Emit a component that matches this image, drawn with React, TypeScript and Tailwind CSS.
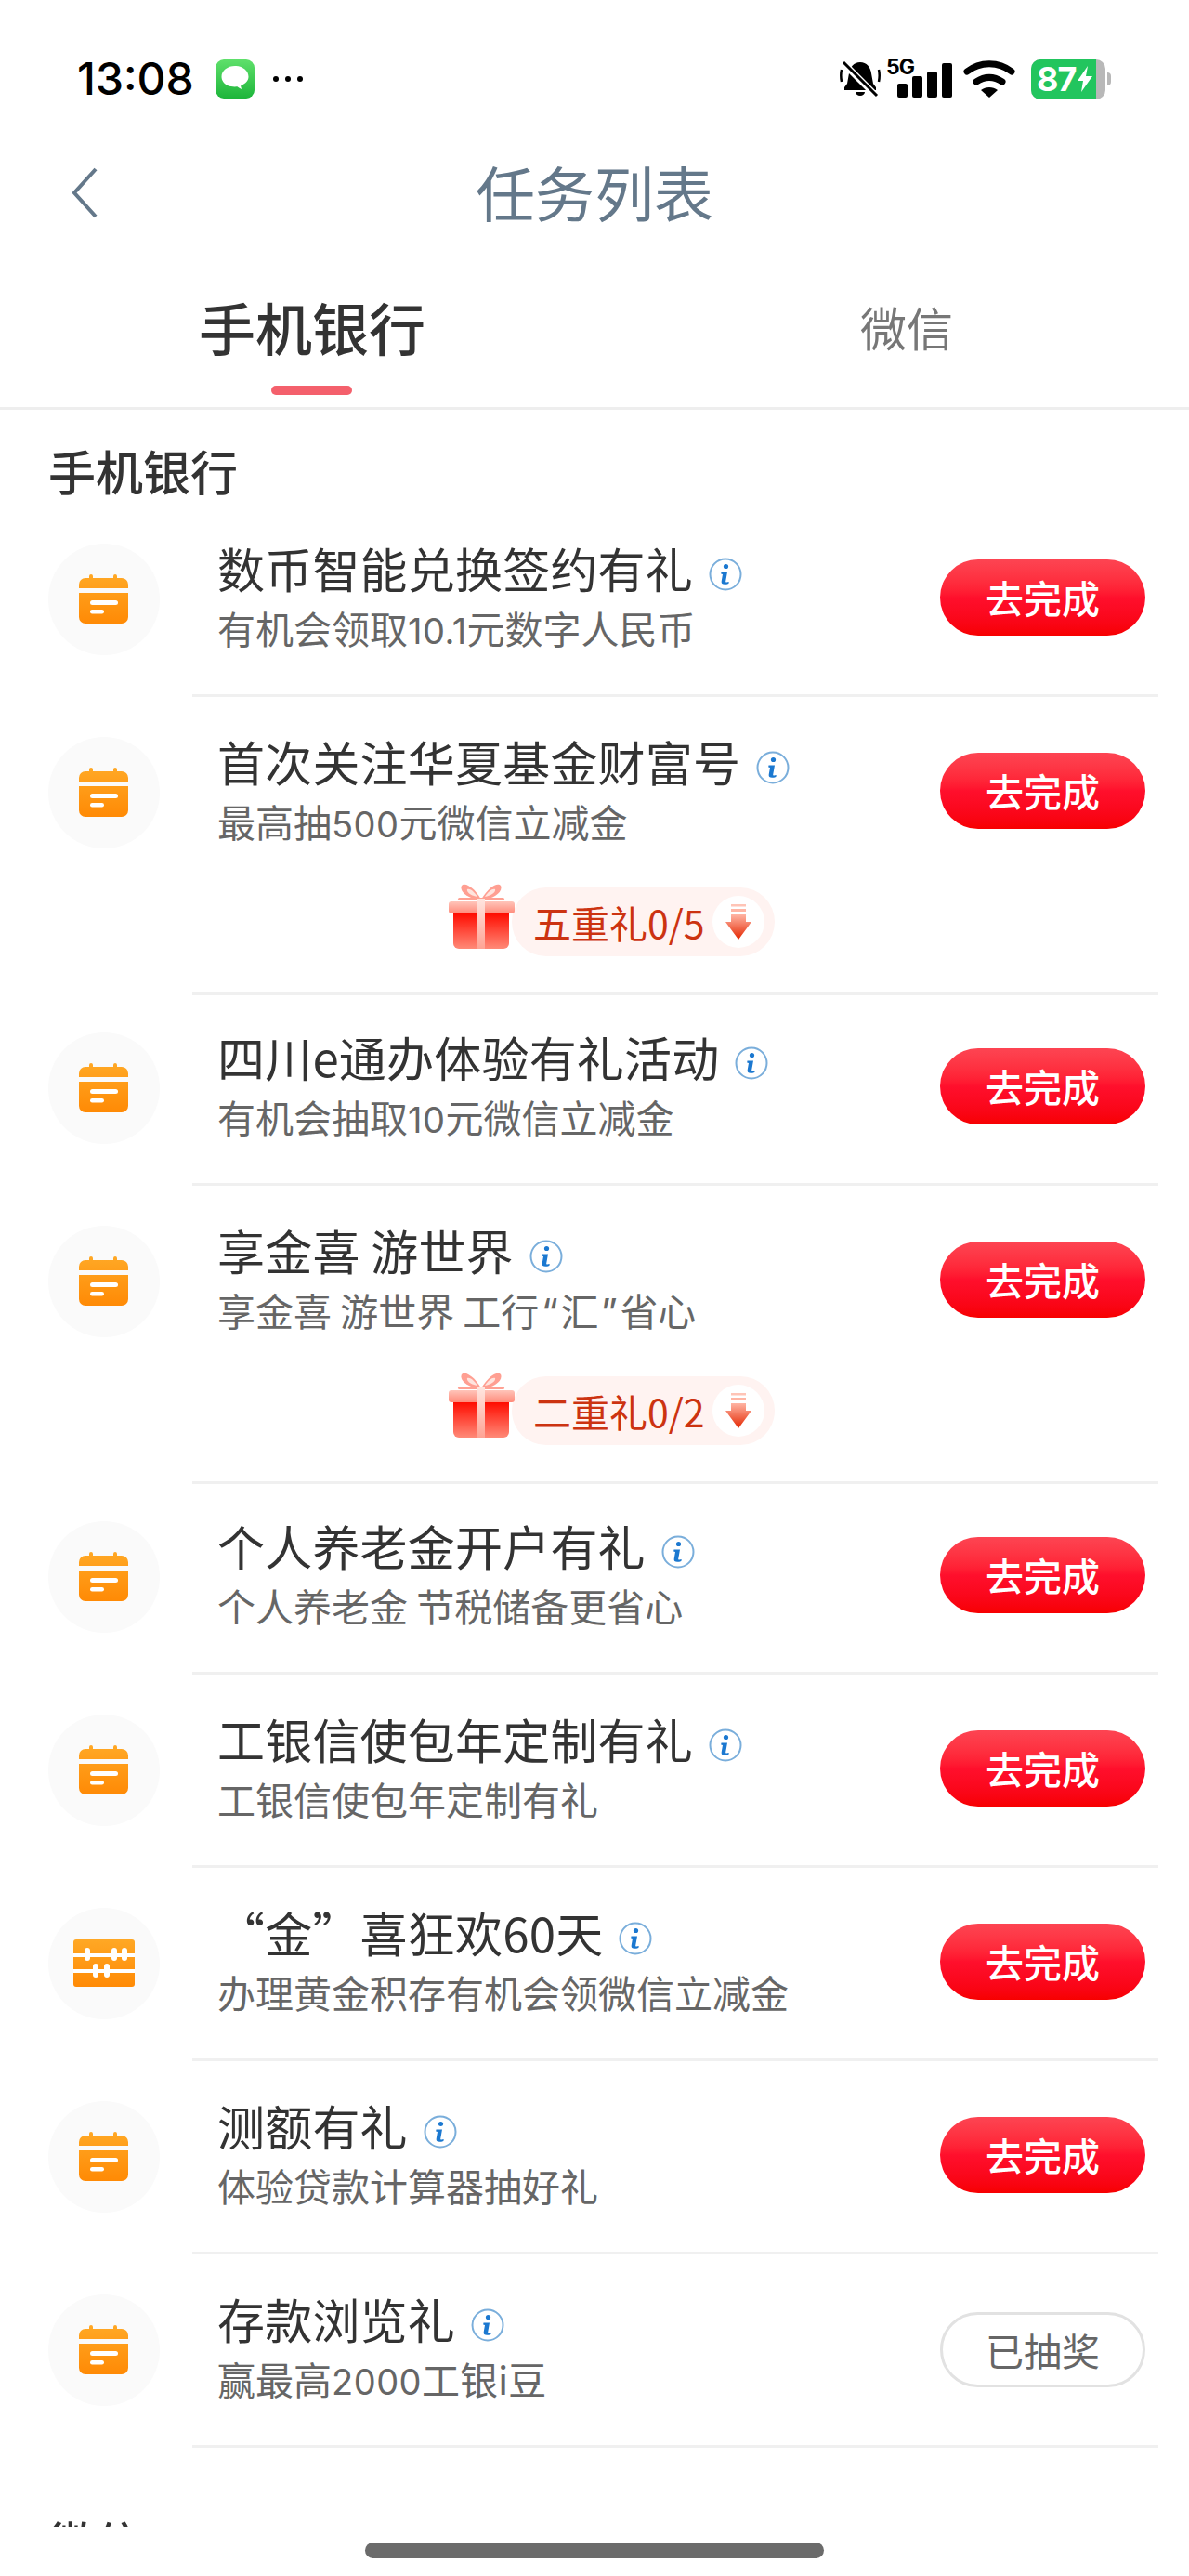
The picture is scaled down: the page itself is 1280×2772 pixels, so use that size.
import React from "react";

type Task = {
  title: string;
  sub: string;
  icon?: "calendar" | "abacus";
  gift?: string;
  done?: boolean;
};

const tasks: Task[] = [
  { title: "数币智能兑换签约有礼", sub: "有机会领取10.1元数字人民币" },
  { title: "首次关注华夏基金财富号", sub: "最高抽500元微信立减金", gift: "五重礼0/5" },
  { title: "四川e通办体验有礼活动", sub: "有机会抽取10元微信立减金" },
  { title: "享金喜 游世界", sub: "享金喜 游世界 工行“汇”省心", gift: "二重礼0/2" },
  { title: "个人养老金开户有礼", sub: "个人养老金 节税储备更省心" },
  { title: "工银信使包年定制有礼", sub: "工银信使包年定制有礼" },
  { title: "“金”喜狂欢60天", sub: "办理黄金积存有机会领微信立减金", icon: "abacus" },
  { title: "测额有礼", sub: "体验贷款计算器抽好礼" },
  { title: "存款浏览礼", sub: "赢最高2000工银i豆", done: true },
];

// digits and quotes are narrower in the app's font than in Noto CJK
const SubText = ({ text }: { text: string }) => (
  <>
    {text.split(/([0-9.]+|[“”])/).map((part, i) => {
      if (i % 2 === 0) return part;
      if (part === "“" || part === "”") {
        return (
          <span key={i} className="inline-block w-[23px] text-center font-['Inter',sans-serif] leading-none">
            {part}
          </span>
        );
      }
      return (
        <span key={i} className="font-['Inter',sans-serif] text-[38px] leading-none tracking-[0.5px]">
          {part}
        </span>
      );
    })}
  </>
);

const CalendarIcon = () => (
  <svg width="54" height="55" viewBox="0 0 54 55">
    <defs>
      <linearGradient id="cal" x1="0" y1="0" x2="0" y2="1">
        <stop offset="0" stopColor="#ffa825" />
        <stop offset="1" stopColor="#ff8a05" />
      </linearGradient>
    </defs>
    <path
      d="M11 5V3a2 2 0 0 1 4 0v2h22V3a2 2 0 0 1 4 0v2h5a7 7 0 0 1 7 7v4H0v-4a7 7 0 0 1 7-7zM0 21h53v26a7 7 0 0 1-7 7H7a7 7 0 0 1-7-7z"
      fill="url(#cal)"
    />
    <rect x="12" y="29" width="30" height="5" rx="2.5" fill="#fff" />
    <rect x="12" y="39" width="15" height="4.5" rx="2.2" fill="#fff" />
  </svg>
);

const AbacusIcon = () => (
  <svg width="66" height="51" viewBox="0 0 66 51">
    <defs>
      <linearGradient id="aba" x1="0" y1="0" x2="0" y2="1">
        <stop offset="0" stopColor="#ffa825" />
        <stop offset="1" stopColor="#ff8a05" />
      </linearGradient>
    </defs>
    <rect width="66" height="51" rx="3" fill="url(#aba)" />
    <rect y="15" width="66" height="4" fill="#fff" />
    <rect y="32" width="66" height="4" fill="#fff" />
    {[15, 44, 55].map((x) => (
      <rect key={x} x={x - 3} y="9" width="6" height="14" rx="3" fill="#fff" />
    ))}
    {[24, 36].map((x) => (
      <rect key={x} x={x - 3} y="26" width="6" height="15" rx="3" fill="#fff" />
    ))}
  </svg>
);

const InfoIcon = () => (
  <svg width="36" height="36" viewBox="0 0 36 36" className="mt-[14px] shrink-0">
    <circle cx="18" cy="18" r="16.5" fill="none" stroke="#7aaedb" strokeWidth="2" />
    <circle cx="18.5" cy="9.5" r="2.6" fill="#1b78d0" />
    <path
      d="M13.5 15.5h6.5l-1.8 10c-.2 1 .8 1.3 3.5.6l-.3 1.8c-1.5.7-3 .9-4.3.9-2.500-.1-3.800-1.200-3.400-3.300l1.300-7.500-1.800-.4z"
      fill="#1b78d0"
    />
  </svg>
);

const GiftIcon = () => (
  <svg width="71" height="71" viewBox="0 0 71 71" className="relative mt-[-4px] shrink-0 self-start">
    <defs>
      <linearGradient id="giftBody" x1="0" y1="0" x2="0" y2="1">
        <stop offset="0" stopColor="#ff0c00" />
        <stop offset="1" stopColor="#ff8a78" />
      </linearGradient>
      <linearGradient id="giftLid" x1="0" y1="0" x2="0" y2="1">
        <stop offset="0" stopColor="#ffc5ba" />
        <stop offset="1" stopColor="#ff8a7a" />
      </linearGradient>
      <linearGradient id="giftBand" x1="0" y1="0" x2="0" y2="1">
        <stop offset="0" stopColor="#ffe6e0" />
        <stop offset="1" stopColor="#ffa394" />
      </linearGradient>
    </defs>
    <path d="M35 17C27 3 17-2 14 2c-3 6 7 15 21 15z" fill="#ff9f92" />
    <path d="M35 17C43 3 53-2 56 2c3 6-7 15-21 15z" fill="#ff9f92" />
    <path d="M31 14C27 8 23 5 20 6c-1 3 4 7 11 8zM39 14c4-6 8-9 11-8 1 3-4 7-11 8z" fill="#ffe4de" />
    <rect x="10" y="15" width="50" height="3" rx="1.500" fill="#ffa193" />
    <rect x="0" y="19" width="71" height="13" rx="3" fill="url(#giftLid)" />
    <path d="M5 32h60v32a6 6 0 0 1-6 6H11a6 6 0 0 1-6-6z" fill="url(#giftBody)" />
    <rect x="30" y="16" width="9" height="54" fill="url(#giftBand)" />
  </svg>
);

const DownArrow = () => (
  <svg width="28" height="38" viewBox="0 0 28 38">
    <defs>
      <linearGradient id="arr" x1="0" y1="0" x2="0" y2="1">
        <stop offset="0" stopColor="#ffb5a4" />
        <stop offset="1" stopColor="#e42600" />
      </linearGradient>
    </defs>
    <rect x="6" y="0" width="16" height="2.500" fill="#ffc4b6" />
    <rect x="6" y="5" width="16" height="3" fill="#ffb5a4" />
    <path d="M6 11h16v8h6L14 38 0 19h6z" fill="url(#arr)" />
  </svg>
);

const TaskRow = ({ task }: { task: Task }) => (
  <>
    <div className="flex h-[205px] items-center pl-[52px] pr-[47px]">
      <div className="flex h-[120px] w-[120px] shrink-0 items-center justify-center rounded-full bg-[#fafafa]">
        {task.icon === "abacus" ? <AbacusIcon /> : <CalendarIcon />}
      </div>
      <div className="mb-[4px] ml-[62px] min-w-0 flex-1">
        <div className="flex items-center gap-[17px] text-[51px] leading-[66px] tracking-[0.2px] text-[#333333]">
          <span>{task.title}</span>
          <InfoIcon />
        </div>
        <div className="mt-[-2px] text-[41px] leading-[66px] text-[#666666]">
          <SubText text={task.sub} />
        </div>
      </div>
      {task.done ? (
        <div className="flex h-[81px] w-[221px] shrink-0 items-center justify-center rounded-full border-[3px] border-[#e2e2e2] text-[41px] text-[#666666]">
          已抽奖
        </div>
      ) : (
        <div className="mb-[3px] flex h-[82px] w-[221px] shrink-0 items-center justify-center rounded-full bg-gradient-to-b from-[#fd4452] via-[#ff0f2c] to-[#f70000] text-[41px] font-medium text-white">
          去完成
        </div>
      )}
    </div>
    {task.gift && (
      <div className="flex h-[113px] pl-[483px]">
        <div className="flex h-[74px] items-center">
          <GiftIcon />
          <div className="ml-[-3px] flex h-[74px] w-[283px] items-center rounded-full bg-[#fff3f1] pl-[23px]">
            <span className="w-[193px] text-[41px] leading-none text-[#cc3311]">{task.gift}</span>
            <span className="flex h-[56px] w-[56px] items-center justify-center rounded-full bg-white">
              <DownArrow />
            </span>
          </div>
        </div>
      </div>
    )}
    {/* the divider under a gift row sits a little lower than the row rhythm */}
    <div className={task.gift ? "mb-[-3px] ml-[207px] mr-[33px] h-[3px] bg-[#f0f0f0]" : "ml-[207px] mr-[33px] h-[3px] bg-[#f0f0f0]"} />
  </>
);

export default function App() {
  return (
    <div
      lang="zh-CN"
      className="flex h-[2772px] w-[1280px] flex-col overflow-hidden bg-white font-['Noto_Sans_CJK_SC',sans-serif]"
    >
      {/* status bar */}
      <div className="relative flex h-[140px] shrink-0 items-start justify-between pl-[83px] pr-[84px] pt-[56px]">
        <div className="flex h-[58px] items-center">
          <span className="font-['Inter',sans-serif] text-[48px] font-medium leading-none text-black">13:08</span>
          <svg width="42" height="42" viewBox="0 0 42 42" className="ml-[23px]">
            <defs>
              <linearGradient id="msg" x1="0" y1="0" x2="0" y2="1">
                <stop offset="0" stopColor="#5fe06b" />
                <stop offset="1" stopColor="#1db53a" />
              </linearGradient>
            </defs>
            <rect width="42" height="42" rx="9" fill="url(#msg)" />
            <path
              d="M21 7c-8 0-14.500 4.900-14.500 11.500 0 4 2.500 7.500 6.500 9.500 3 1.300 7 1.700 10.500 1.300 1.200 1.200 3 2.200 5 2.700-.8-1-1.300-2.200-1.300-3.800C32.700 26 35.500 22.500 35.500 18.500 35.500 11.900 29 7 21 7z"
              fill="#fff"
            />
          </svg>
          <div className="ml-[20px] flex gap-[7px]">
            <span className="h-[6px] w-[6px] rounded-full bg-black" />
            <span className="h-[6px] w-[6px] rounded-full bg-black" />
            <span className="h-[6px] w-[6px] rounded-full bg-black" />
          </div>
        </div>
        <div className="flex h-[58px] items-center">
          {/* muted bell */}
          <svg width="44" height="40" viewBox="0 0 44 40">
            <path d="M22 2c-7 0-11 5-12 12l-2 11-3 4v3h34v-3l-3-4-2-11C33 7 29 2 22 2z" fill="#000" />
            <path d="M17 34h10a5 4 0 0 1-10 0z" fill="#000" />
            <path d="M2 10c-1 4-1 8 0 13M42 10c1 4 1 8 0 13" fill="none" stroke="#000" strokeWidth="2.500" />
            <path d="M4 3l36 36" stroke="#fff" strokeWidth="7" />
            <path d="M4 2l36 36" stroke="#000" strokeWidth="3" />
          </svg>
          <div className="relative ml-[6px] h-[42px] w-[71px]">
            <span className="absolute left-0 top-[-4px] font-['Inter',sans-serif] text-[23px] font-bold leading-[24px] tracking-[-1px] text-black">
              5G
            </span>
            <div className="absolute bottom-[1px] right-0 flex items-end gap-[5px]">
              <span className="h-[15px] w-[11px] rounded-[2px] bg-black" />
              <span className="h-[23px] w-[11px] rounded-[2px] bg-black" />
              <span className="h-[28px] w-[11px] rounded-[2px] bg-black" />
              <span className="h-[37px] w-[11px] rounded-[2px] bg-black" />
            </div>
          </div>
          <svg width="56" height="40" viewBox="0 0 56 40" className="ml-[12px]">
            <path d="M4 12c14-11 34-11 48 0" fill="none" stroke="#000" strokeWidth="7" strokeLinecap="round" />
            <path d="M14 23c9-6 19-6 28 0" fill="none" stroke="#000" strokeWidth="7" strokeLinecap="round" />
            <path d="M19 32c5-4 13-4 18 0l-9 8z" fill="#000" />
          </svg>
          <div className="relative ml-[17px] flex h-[43px] w-[80px] items-center overflow-hidden rounded-[10px] bg-[#b8b8b8]">
            <div className="flex h-full w-[70px] items-center bg-[#22c55e] pl-[6px]">
              <span className="font-['Inter',sans-serif] text-[36px] font-bold leading-none tracking-[-1px] text-white">
                87
              </span>
              <svg width="18" height="28" viewBox="0 0 18 28" className="ml-[1px] shrink-0">
                <path d="M12 0L1 16h6L5 28l12-17h-7z" fill="#fff" />
              </svg>
            </div>
          </div>
          <span className="ml-[2px] h-[14px] w-[4px] rounded-r-full bg-[#b8b8b8]" />
        </div>
      </div>

      {/* nav */}
      <div className="relative flex h-[134px] shrink-0 items-center justify-center pb-[5px]">
        <svg width="30" height="55" viewBox="0 0 30 55" className="absolute left-[76px] top-[40px]">
          <path d="M27 2L4 27.500 27 53" fill="none" stroke="#64788a" strokeWidth="4" />
        </svg>
        <span className="text-[64px] leading-none text-[#64788a]">任务列表</span>
      </div>

      {/* tabs */}
      <div className="grid h-[167px] shrink-0 grid-cols-[672px_608px] border-b-[3px] border-[#eeeeee]">
        <div className="relative flex h-[158px] items-center justify-center pb-[4px]">
          <span className="text-[61px] font-medium leading-none text-[#333333]">手机银行</span>
          <span className="absolute bottom-[7px] left-[292px] h-[10px] w-[87px] rounded-full bg-[#f4606c]" />
        </div>
        <div className="flex h-[158px] items-center justify-center pb-[4px]">
          <span className="text-[50px] leading-none text-[#777777]">微信</span>
        </div>
      </div>

      {/* list */}
      <div className="min-h-0 flex-1 overflow-hidden">
        <div className="h-[101px] pl-[52px] pt-[35px] text-[51px] font-medium leading-[60px] text-[#333333]">
          手机银行
        </div>
        {tasks.map((task) => (
          <TaskRow key={task.title} task={task} />
        ))}
        <div className="mt-[71px] pl-[52px] text-[51px] font-medium leading-[60px] text-[#333333]">微信</div>
      </div>

      {/* home indicator */}
      <div className="flex h-[53px] shrink-0 justify-center pt-[17px]">
        <span className="h-[17px] w-[494px] rounded-full bg-[#6b6b6b]" />
      </div>
    </div>
  );
}
